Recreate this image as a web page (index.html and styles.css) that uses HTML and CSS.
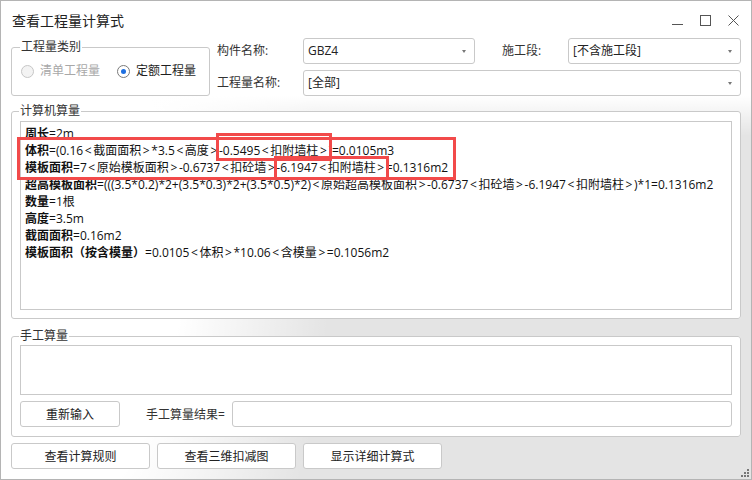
FILE: index.html
```html
<!DOCTYPE html>
<html lang="zh-CN">
<head>
  <meta charset="UTF-8" />
  <title>查看工程量计算式</title>
  <link rel="stylesheet" href="styles.css">
</head>
<body>

<div class="window">
  <!-- Title bar -->
  <div class="titlebar">
    <span class="title">查看工程量计算式</span>
    <div class="controls">
      <svg width="11" height="11" viewBox="0 0 11 11"><path d="M0 9.5H11" stroke="#555" stroke-width="1"/></svg>
      <svg width="11" height="11" viewBox="0 0 11 11"><rect x="0.5" y="0.5" width="10" height="10" fill="none" stroke="#555" stroke-width="1"/></svg>
      <svg width="11" height="11" viewBox="0 0 11 11"><path d="M0.5 0.5L10.5 10.5M10.5 0.5L0.5 10.5" stroke="#555" stroke-width="1"/></svg>
    </div>
  </div>

  <!-- Filters -->
  <div class="top">
    <fieldset class="group kind">
      <legend>工程量类别</legend>
      <label class="radio disabled"><span class="dot"></span>清单工程量</label>
      <label class="radio checked"><span class="dot"></span>定额工程量</label>
    </fieldset>

    <div class="fields">
      <span class="field-label">构件名称:</span>
      <div class="combo">GBZ4</div>
      <span class="field-label second">施工段:</span>
      <div class="combo">[不含施工段]</div>
      <span class="field-label">工程量名称:</span>
      <div class="combo wide">[全部]</div>
    </div>
  </div>

  <!-- Computed -->
  <fieldset class="group computed">
    <legend>计算机算量</legend>
    <div class="textbox formula">
      <div><b>周长</b>=2m</div>
      <div class="hl-block">
        <div><b>体积</b>=(0.16<i>&lt;</i>截面面积<i>&gt;</i>*3.5<i>&lt;</i>高度<i>&gt;</i><span class="hl hl-a">-0.5495<i>&lt;</i>扣附墙柱<i>&gt;</i></span>)=0.0105m3</div>
        <div><b>模板面积</b>=7<i>&lt;</i>原始模板面积<i>&gt;</i>-0.6737<i>&lt;</i>扣砼墙<i>&gt;</i><span class="hl hl-b">-6.1947<i>&lt;</i>扣附墙柱<i>&gt;</i></span>=0.1316m2</div>
      </div>
      <div><b>超高模板面积</b>=(((3.5*0.2)*2+(3.5*0.3)*2+(3.5*0.5)*2)<i>&lt;</i>原始超高模板面积<i>&gt;</i>-0.6737<i>&lt;</i>扣砼墙<i>&gt;</i>-6.1947<i>&lt;</i>扣附墙柱<i>&gt;</i>)*1=0.1316m2</div>
      <div><b>数量</b>=1根</div>
      <div><b>高度</b>=3.5m</div>
      <div><b>截面面积</b>=0.16m2</div>
      <div><b>模板面积（按含模量）</b>=0.0105<i>&lt;</i>体积<i>&gt;</i>*10.06<i>&lt;</i>含模量<i>&gt;</i>=0.1056m2</div>
    </div>
  </fieldset>

  <!-- Manual -->
  <fieldset class="group manual">
    <legend>手工算量</legend>
    <div class="textbox manual-input"></div>
    <div class="manual-row">
      <button class="btn reset">重新输入</button>
      <span class="result-label">手工算量结果=</span>
      <div class="result-input"></div>
    </div>
  </fieldset>

  <div class="actions">
    <button class="btn">查看计算规则</button>
    <button class="btn">查看三维扣减图</button>
    <button class="btn">显示详细计算式</button>
  </div>

  <svg class="grip" width="8" height="8" viewBox="0 0 8 8">
    <rect x="6" y="0" width="2" height="2" fill="#777"/>
    <rect x="3" y="3" width="2" height="2" fill="#777"/>
    <rect x="6" y="3" width="2" height="2" fill="#777"/>
    <rect x="0" y="6" width="2" height="2" fill="#777"/>
    <rect x="3" y="6" width="2" height="2" fill="#777"/>
    <rect x="6" y="6" width="2" height="2" fill="#777"/>
  </svg>
</div>

</body>
</html>
```

FILE: styles.css
```css
:root {
  --border: #c9c9c9;
  --text: #1f1f1f;
  --red: #f24a4a;
}

body {
  margin: 0;
  font-family: "Open Sans", "Noto Sans CJK SC", sans-serif;
  font-size: 12px;
  color: var(--text);
}

.window {
  position: relative;
  width: 752px;
  height: 480px;
  box-sizing: border-box;
  border: 1px solid #b4b4b4;
  padding: 0 10px;
  display: flex;
  flex-direction: column;
  background:
    linear-gradient(to bottom, #fff 0, #fff 95px, rgba(255,255,255,0) 135px),
    radial-gradient(ellipse 330px 520px at 0 260px, #fff 0, #fff 55%, rgba(255,255,255,0) 100%),
    #e4e4e4;
}

.titlebar {
  height: 37px;
  display: flex;
  align-items: center;
  justify-content: space-between;
  padding: 0 2px 0 1px;
}

.title {
  font-size: 14px;
  color: #222;
}

.controls {
  display: flex;
  gap: 17px;
  padding-top: 2px;
}

.controls svg { display: block; }

/* fieldsets */
.group {
  margin: 0;
  border: 1px solid var(--border);
  border-radius: 3px;
  background: #fff;
  min-width: 0;
}

.group legend {
  padding: 0 1px;
  margin-left: -1px;
  line-height: 16px;
  font-size: 12px;
  color: #333;
}

.top {
  height: 58px;
  display: flex;
  align-items: flex-start;
}

.kind {
  width: 199px;
  height: 57px;
  box-sizing: border-box;
  margin-top: 1px;
  padding: 8px 9px 0;
  display: flex;
  gap: 17px;
  background: transparent;
}

.radio {
  display: flex;
  align-items: center;
  gap: 6px;
  line-height: 16px;
  height: 16px;
}

.radio .dot {
  width: 13px;
  height: 13px;
  box-sizing: border-box;
  border-radius: 50%;
  border: 1px solid #7a7a7a;
  background: #fff;
  display: flex;
  align-items: center;
  justify-content: center;
}

.radio.disabled { color: #a8a8a8; }
.radio.disabled .dot { border-color: #c6c6c6; background: #f3f3f3; }
.radio.checked .dot::after {
  content: "";
  width: 5px;
  height: 5px;
  border-radius: 50%;
  background: #1e6fe0;
}

.fields {
  margin-left: 7px;
  flex: 1;
  display: grid;
  grid-template-columns: 86px 172px 93px 1fr;
  grid-template-rows: 26px 26px;
  row-gap: 6px;
  align-items: center;
}

.field-label { color: #333; line-height: 16px; }
.field-label.second { padding-left: 27px; }

.combo {
  position: relative;
  height: 26px;
  box-sizing: border-box;
  border: 1px solid var(--border);
  border-radius: 3px;
  background: #fff;
  padding-left: 4px;
  line-height: 24px;
  color: #222;
}

.combo::after {
  content: "";
  position: absolute;
  right: 8px;
  top: 11px;
  border-left: 2.5px solid transparent;
  border-right: 2.5px solid transparent;
  border-top: 3px solid #777;
}

.combo.wide { grid-column: 2 / 5; }

/* computed */
.computed {
  margin-top: 7px;
  padding: 2px 8px 8px;
}

.textbox {
  border: 1px solid var(--border);
  background: #fff;
  box-sizing: border-box;
}

.formula {
  position: relative;
  height: 189px;
  padding: 3px 4px;
  line-height: 17px;
  white-space: nowrap;
  color: #111;
}

.formula b { font-weight: bold; }

/* angle brackets are set wider in the original font */
.formula i {
  font-style: normal;
  padding: 0 1.6px;
}

.hl-block {
  position: relative;
  width: fit-content;
}

.hl-block::after {
  content: "";
  position: absolute;
  left: -8px;
  right: -8px;
  top: -5px;
  bottom: -4px;
  border: 3px solid var(--red);
}

.hl { position: relative; }

.hl::after {
  content: "";
  position: absolute;
  border: 3px solid var(--red);
}

.hl-a::after { left: -3px; right: -4px; top: -9px; bottom: -2px; }
.hl-b::after { left: -2px; right: -3px; top: -3px; bottom: -4px; }

/* manual */
.manual {
  margin-top: 9px;
  padding: 1px 8px 9px;
}

.manual-input { height: 50px; }

.manual-row {
  margin-top: 6px;
  display: flex;
  align-items: center;
}

.btn {
  height: 26px;
  box-sizing: border-box;
  border: 1px solid var(--border);
  border-radius: 3px;
  background: #fff;
  font-family: inherit;
  font-size: 12px;
  color: #222;
  padding: 0;
}

.reset { width: 100px; }

.result-label {
  margin-left: 26px;
  width: 86px;
  color: #333;
}

.result-input {
  flex: 1;
  height: 26px;
  box-sizing: border-box;
  border: 1px solid var(--border);
  border-radius: 3px;
  background: #fff;
}

.actions {
  margin-top: 6px;
  display: flex;
  gap: 7px;
}

.actions .btn { width: 139px; }

.grip {
  position: absolute;
  right: 2px;
  bottom: 2px;
}
```
